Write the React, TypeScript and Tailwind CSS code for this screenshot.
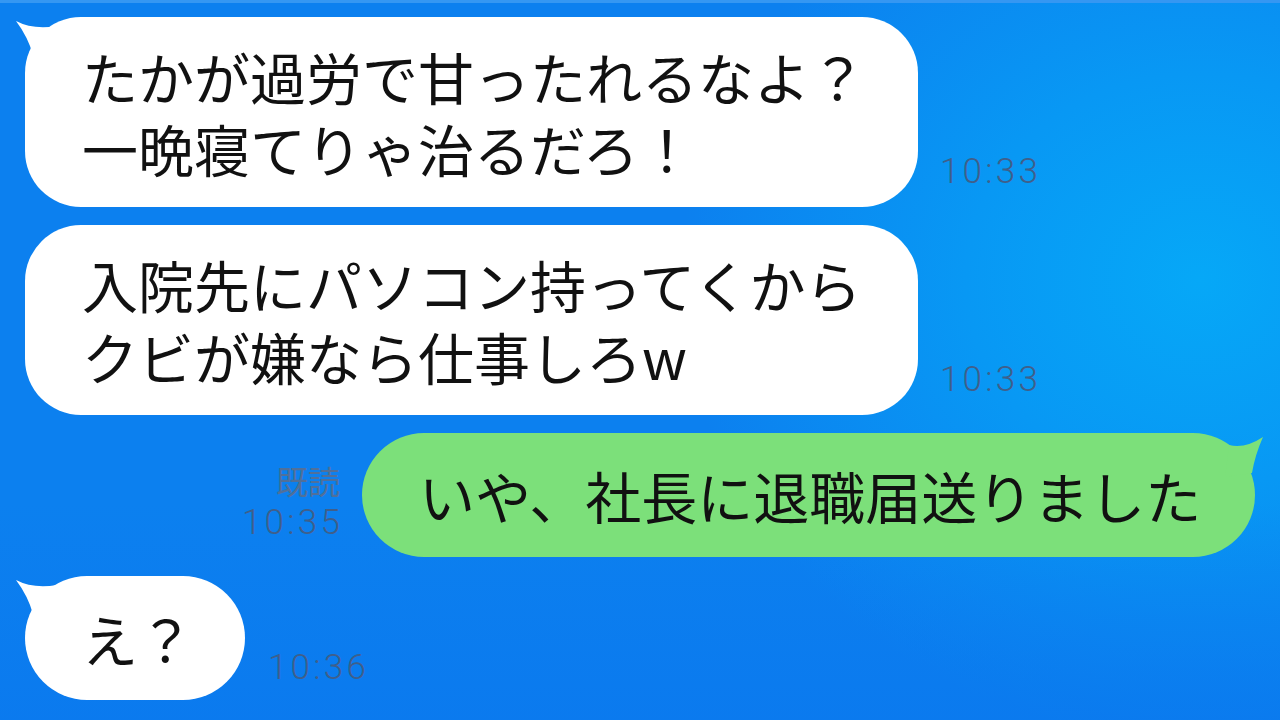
import React from "react";

const jp = "font-['Noto_Sans_CJK_JP','Noto_Sans',sans-serif]";
const ts = "font-['Roboto','Liberation_Sans',sans-serif] font-light text-[35px] leading-none tracking-[3.2px] text-[#405f8a]";

function LeftTail() {
  return (
    <svg
      className="absolute left-0 top-0 overflow-visible"
      width="40"
      height="40"
      viewBox="0 0 40 40"
    >
      <path d="M -9 4 Q 8 13 32 9 L 32 42 L 8 38 Q 3 20 -9 4 Z" fill="#ffffff" />
    </svg>
  );
}

function RightTail() {
  return (
    <svg
      className="absolute right-0 top-0 overflow-visible"
      width="40"
      height="40"
      viewBox="0 0 40 40"
    >
      <path d="M 48 4 Q 30 16 14 12 L 10 44 L 37 40 Q 40 22 48 4 Z" fill="#7ce07a" />
    </svg>
  );
}

export default function App() {
  return (
    <div className="relative w-[1280px] h-[720px] overflow-hidden bg-[#0c80ef]">
      <div className="absolute inset-0 bg-[radial-gradient(ellipse_520px_460px_at_1200px_280px,#06a8f7_0%,#0898f4_45%,rgba(12,128,239,0)_100%)]" />
      <div className="absolute inset-0 bg-[linear-gradient(180deg,rgba(10,120,238,0)_0%,rgba(10,120,238,0)_70%,rgba(10,118,238,0.6)_100%)]" />
      <div className="absolute left-0 right-0 top-0 h-[3px] bg-[#3597f2]" />

      <div className={`relative flex flex-col pt-[17px] px-[25px] ${jp}`}>
        {/* Message 1 */}
        <div className="flex items-end">
          <div className="relative w-[893px] rounded-[56px] bg-white pl-[57px] py-[23px] text-[56px] leading-[72px] text-[#111111]">
            <LeftTail />
            <div className="relative">たかが過労で甘ったれるなよ？</div>
            <div className="relative">一晩寝てりゃ治るだろ！</div>
          </div>
          <div className={`${ts} ml-[22px] mb-[18px]`}>10:33</div>
        </div>

        {/* Message 2 */}
        <div className="flex items-end mt-[18px]">
          <div className="relative w-[893px] rounded-[56px] bg-white pl-[57px] py-[23px] text-[56px] leading-[72px] text-[#111111]">
            <div className="relative">入院先にパソコン持ってくから</div>
            <div className="relative">クビが嫌なら仕事しろw</div>
          </div>
          <div className={`${ts} ml-[22px] mb-[18px]`}>10:33</div>
        </div>

        {/* Message 3 (mine) */}
        <div className="flex items-end justify-end mt-[18px]">
          <div className="flex flex-col items-end mr-[19px] mb-[17px]">
            <div className={`${jp} text-[32px] leading-none text-[#50709a] mb-[9px] mr-[3px]`}>既読</div>
            <div className={ts}>10:35</div>
          </div>
          <div className="relative w-[893px] h-[124px] rounded-full bg-[#7ce07a] pl-[57px] flex items-center text-[56px] leading-[72px] text-[#111111]">
            <RightTail />
            <div className="relative">いや、社長に退職届送りました</div>
          </div>
        </div>

        {/* Message 4 */}
        <div className="flex items-end mt-[19px]">
          <div className="relative w-[220px] h-[124px] rounded-full bg-white pl-[57px] flex items-center text-[56px] leading-[72px] text-[#111111]">
            <LeftTail />
            <div className="relative">え？</div>
          </div>
          <div className={`${ts} ml-[23px] mb-[15px]`}>10:36</div>
        </div>
      </div>
    </div>
  );
}
